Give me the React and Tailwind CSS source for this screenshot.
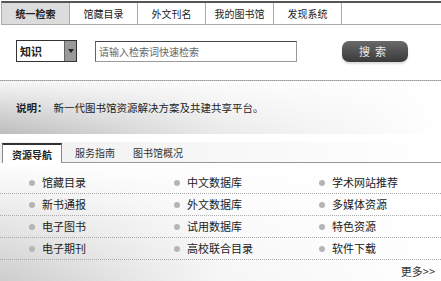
import React from 'react';

const topTabs = ['统一检索', '馆藏目录', '外文刊名', '我的图书馆', '发现系统'];

const resources = [
  ['馆藏目录', '中文数据库', '学术网站推荐'],
  ['新书通报', '外文数据库', '多媒体资源'],
  ['电子图书', '试用数据库', '特色资源'],
  ['电子期刊', '高校联合目录', '软件下载'],
];

const font = { fontFamily: '"Noto Sans CJK SC", "Noto Sans", sans-serif' };

const App = () => {
  return (
    <div className="w-[441px] h-[281px] bg-white overflow-hidden text-[#222]" style={font}>
      {/* 顶部导航 */}
      <div className="mt-[1px] h-[24px] flex border-t-2 border-[#555] border-b border-b-[#aaa] border-l border-l-[#aaa] ml-[1px]">
        {topTabs.map((t, i) => (
          <div
            key={t}
            className={`w-[68px] flex items-center justify-center text-[10px] border-r border-[#aaa] ${
              i === 0 ? 'bg-[#dcdcdc] font-bold' : ''
            }`}
          >
            {t}
          </div>
        ))}
      </div>

      {/* 检索栏 */}
      <div className="flex items-center h-[55px] pb-[3px]">
        <div className="ml-[16px] w-[61px] h-[22px] border border-[#333] flex items-stretch bg-white">
          <span className="flex-1 pl-[3px] flex items-center text-[11px] font-bold">知识</span>
          <span className="w-[12px] bg-[#9a9a9a] border-l border-[#666] flex items-center justify-center">
            <svg width="6" height="4" viewBox="0 0 6 4">
              <path d="M0 0h6L3 4z" fill="#222" />
            </svg>
          </span>
        </div>
        <div className="ml-[18px] w-[202px] h-[21px] border border-[#999] border-t-[#444] border-l-[#666] flex items-center pl-[3px] text-[10px] text-[#666]">
          请输入检索词快速检索
        </div>
        <div className="ml-[45px] w-[66px] h-[21px] rounded-[7px] bg-linear-to-b from-[#6a6a6a] to-[#3a3a3a] flex items-center justify-center text-[11px] text-[#e8e8e8] tracking-[5px] shadow-[0_2px_2px_#ddd]">
          搜索
        </div>
      </div>

      {/* 说明 */}
      <div className="border-t border-dotted border-[#999] h-[54px] bg-linear-to-b from-[#f6f6f6] to-[#bcbcbc]">
        <div className="h-full bg-linear-to-r from-transparent via-[#ffffffb0] to-white flex items-center pl-[16px] text-[10.5px]">
          <span className="font-bold">说明：</span>
          <span className="ml-[6px]">新一代图书馆资源解决方案及共建共享平台。</span>
        </div>
      </div>

      {/* 资源导航 */}
      <div className="mt-[8px] flex items-end h-[21px] bg-linear-to-r from-[#f0f0f0] to-white">
        <div className="ml-[2px] w-[60px] h-[20px] border-t-2 border-x border-[#333] border-x-[#888] bg-white flex items-center justify-center text-[10px] font-bold">
          资源导航
        </div>
        <div className="flex-1 h-full border-b border-[#999] flex items-center text-[10px] text-[#333]">
          <span className="ml-[13px]">服务指南</span>
          <span className="ml-[18px]">图书馆概况</span>
        </div>
      </div>

      <div className="bg-linear-to-b from-white to-[#cdcdcd]">
        <div className="bg-linear-to-r from-transparent via-[#ffffffd0] to-white pt-[9px]">
          {resources.map((row, r) => (
            <div
              key={r}
              className="grid grid-cols-[145px_145px_1fr] pl-[29px] h-[22px] border-b border-dotted border-[#aaa]"
            >
              {row.map((item) => (
                <div key={item} className="flex items-center text-[11px]">
                  <span className="w-[6px] h-[6px] rounded-full bg-[#b5b5b5] mr-[7px]" />
                  {item}
                </div>
              ))}
            </div>
          ))}
          <div className="flex justify-end pr-[6px] h-[22px] items-center text-[11px] text-[#333]">
            更多&gt;&gt;
          </div>
        </div>
      </div>
    </div>
  );
};

export default App;
